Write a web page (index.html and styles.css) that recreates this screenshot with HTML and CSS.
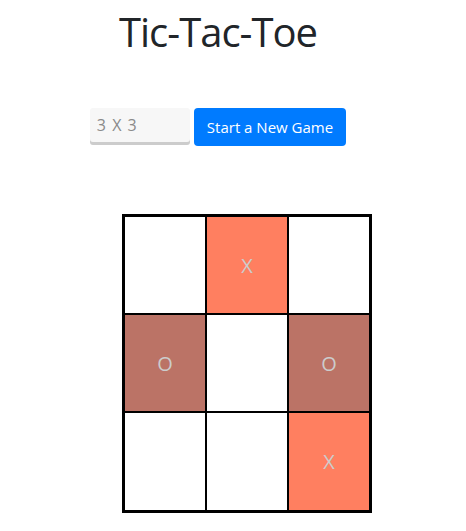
FILE: index.html
```html
<!DOCTYPE html>
<html>
<head>
<meta charset="utf-8">
<link rel="stylesheet" href="styles.css">
</head>
<body>
<div class="app">
  <h1 class="title">Tic-Tac-Toe</h1>
  <div class="controls">
    <input class="size-input" type="text" placeholder="3 X 3">
    <button class="new-game">Start a New Game</button>
  </div>
  <div class="board">
    <div class="cell"></div>
    <div class="cell x">X</div>
    <div class="cell"></div>
    <div class="cell o">O</div>
    <div class="cell"></div>
    <div class="cell o">O</div>
    <div class="cell"></div>
    <div class="cell"></div>
    <div class="cell x">X</div>
  </div>
</div>
</body>
</html>
```
FILE: styles.css
```css
body {
  margin: 0;
  font-family: "Open Sans", "Noto Sans", sans-serif;
  color: #212529;
  background: #fff;
}
.app {
  width: 436px;
  display: flex;
  flex-direction: column;
  align-items: center;
}
.title {
  font-size: 40px;
  font-weight: 400;
  letter-spacing: -1px;
  line-height: 1.2;
  margin: 8px 0 0;
  color: #212529;
}
.controls {
  display: flex;
  gap: 4px;
  margin-top: 52px;
  align-items: flex-start;
}
.size-input {
  box-sizing: border-box;
  width: 100px;
  height: 34px;
  border: none;
  border-radius: 3px;
  background: #f7f7f7;
  box-shadow: 0 3px 0 #cccccc;
  padding: 0 7px;
  font-family: inherit;
  font-size: 16px;
  word-spacing: 2px;
  outline: none;
}
.size-input::placeholder {
  color: #8a8a8a;
}
.new-game {
  box-sizing: border-box;
  height: 38px;
  padding: 0 13px;
  border: none;
  border-radius: 4px;
  background: #007bff;
  color: #fff;
  font-family: inherit;
  font-size: 15px;
}
.board {
  align-self: flex-start;
  margin-left: 122px;
  margin-top: 68px;
  display: grid;
  grid-template-columns: repeat(3, 82px);
  grid-template-rows: 98px 98px 99px;
  border: 2px solid #000;
}
.cell {
  border: 1px solid #000;
  display: flex;
  align-items: center;
  justify-content: center;
  font-size: 20px;
  color: #cccccc;
}
.cell.x {
  background: #ff7f60;
}
.cell.o {
  background: #bb7366;
}
```
